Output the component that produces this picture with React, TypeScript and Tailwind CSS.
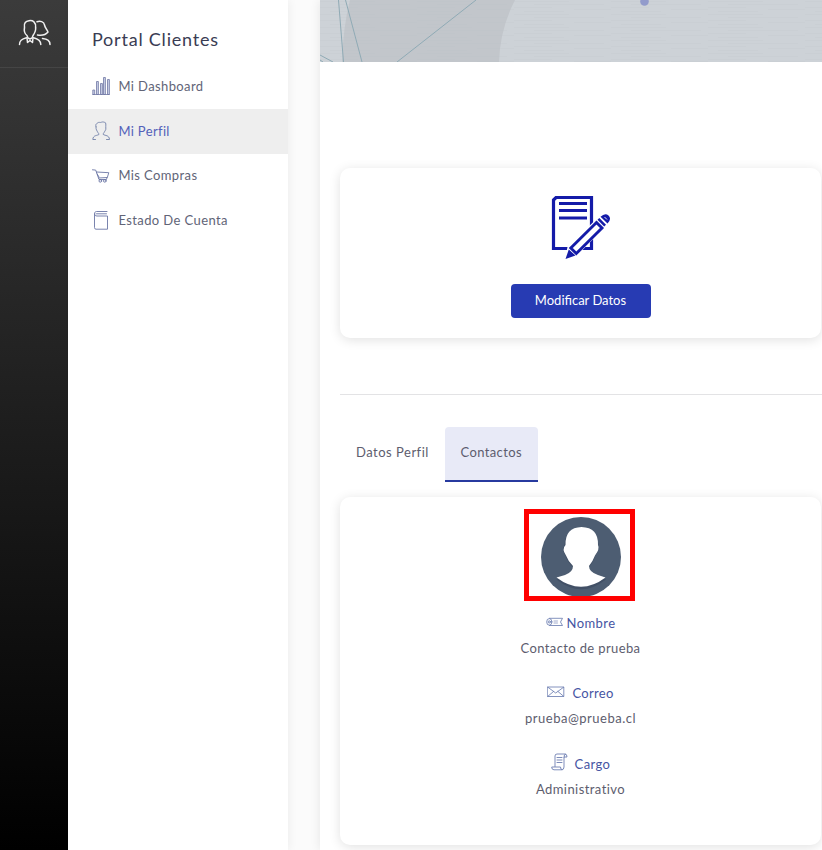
import type { ReactNode } from "react";

const stroke = { fill: "none", stroke: "currentColor", strokeLinecap: "round", strokeLinejoin: "round" } as const;

function UsersIcon() {
  return (
    <svg className="block text-[#f0f0f0]" width="34" height="28" viewBox="0 0 34 28" {...stroke} strokeWidth="1.5">
      <path d="M6.500 8.500C5.500 3.500 8 2.200 11 1.700C15 1.200 18 3 17.600 8.500C18.200 12 16 15 15 16.500L14 19L12 20L10 19L9 16.500C7 15 5.800 12 6.500 8.500Z" />
      <path d="M19 2.700C22 1.600 26 2.500 26.500 6C27 8.500 28.500 10 30 13C28 15.500 25 16.800 19.500 16" />
      <path d="M1.500 25.500C1.500 21.500 3.500 20 8.500 18.700M15.500 18.700C21 20 22.800 22 22.800 25.500" />
      <path d="M24.500 19.500C29 19.800 32 21.800 32 25.500" />
      <path d="M9 19L9.500 23.500L12 21.500L14.500 23.500L15 19" />
    </svg>
  );
}

function ChartIcon() {
  return (
    <svg className="block" width="19" height="20" viewBox="0 0 19 20" fill="#c9cfe6" stroke="#7178a5" strokeWidth=".8">
      <path d="M.8 14h1.900v4.500H.8zM4.500 5.500h1.900v13H4.500zM8.500 7.500h1.900v11H8.500zM11.500 1.500h1.900v17H11.500zM15.500 3.500h1.900v15H15.500zM.4 18.500h17.200" />
    </svg>
  );
}

function UserIcon() {
  return (
    <svg className="block" width="19" height="20" viewBox="0 0 19 20" {...stroke} strokeWidth=".9">
      <path d="M4 5.800C3.200 3 4.500 2.800 5.500 2C7 .7 8 1.900 9.500 1.200C11 .6 12.500 1.200 13.500 1.800C14.200 3.500 13.600 4.500 13.800 7C14.200 9 13 9.500 12.500 10.800C12 12 11 12.500 11.200 13.400C13 14.800 17.300 14 17.500 18.500H14.500M3.500 18.500H.8C1 14 5.200 14.800 7 13.400C7 12.500 6 12 5.500 10.800C5 9.500 3.800 9 4 5.800" />
    </svg>
  );
}

function CartIcon() {
  return (
    <svg className="block" width="19" height="20" viewBox="0 0 19 20" {...stroke} strokeWidth=".9">
      <path d="M.5 3.800L3.700 4.100L7 13.500H14.500L15 11.500M4.500 6L16.800 6.700L15.300 11.500L6.600 12M5.200 8L7 11" />
      <circle cx="8.300" cy="14.900" r="1.300" />
      <circle cx="12.800" cy="14.900" r="1.300" />
    </svg>
  );
}

function BookIcon() {
  return (
    <svg className="block" width="19" height="20" viewBox="0 0 19 20" {...stroke} strokeWidth=".9">
      <path d="M15 1.500H4.500C2.500 1.500 2.500 3.500 2.500 5V17.500Q2.500 19.200 4 19.200H15.500V6H5C3 6 2.500 4.800 2.700 3.700M4.500 3.800H14.500" />
    </svg>
  );
}

function EditDocumentIcon() {
  return (
    <svg className="block" width="60" height="66" viewBox="0 0 60 66">
      <path d="M5 2.500H40.500V53.500H2.500V5Z" fill="#fff" stroke="#141ba8" strokeWidth="3.200" />
      <path d="M8 8.500H36M8 15.500H36M8 23H36" stroke="#141ba8" strokeWidth="2.800" />
      <path d="M14 64L16.500 52L46 23.500L54 32L26.500 60Z" fill="#fff" />
      <path d="M19.800 53L45.500 27.500L51 33L25.300 58.500Z" fill="#fff" stroke="#141ba8" strokeWidth="2.900" />
      <path d="M17.800 54.500L24.500 60.500L14.500 64Z" fill="#141ba8" />
      <path d="M46.500 24.800L48.300 23L55 29.700L53.200 31.500ZM49.500 21.800Q54 17.500 57.500 20.500Q61 24 56.500 28.500Z" fill="#141ba8" />
      <path d="M53.500 22L56 24.500" stroke="#fff" strokeWidth=".9" />
    </svg>
  );
}

function TicketIcon() {
  return (
    <svg className="block" width="18" height="10" viewBox="0 0 18 10" {...stroke} strokeWidth=".8">
      <path d="M3.500 1.300H16.500L14.500 5L16.500 8.500H3.500" />
      <ellipse cx="3.300" cy="4.900" rx="2.600" ry="3.300" />
      <circle cx="3.300" cy="4.900" r="1.100" />
      <path d="M8 4H11.500M8 6H11.500" strokeWidth="1" opacity=".6" />
    </svg>
  );
}

function MailIcon() {
  return (
    <svg className="block" width="18" height="12" viewBox="0 0 18 12" {...stroke} strokeWidth=".8">
      <path d="M.7 1H16.800V10.500H.7ZM1 1.300L8.700 7L16.500 1.300M1 10.200L6.500 5.500M16.500 10.200L11 5.500" />
    </svg>
  );
}

function ScrollIcon() {
  return (
    <svg className="block" width="17" height="18" viewBox="0 0 17 18" {...stroke} strokeWidth=".85">
      <path d="M4 13.500V3Q4 1 6 1H14Q16 1 16 4H13V14Q13 16.800 10.500 16.800H3Q.7 16.800.7 14H9.500Q9.500 16.800 11 16.800M13 4Q13 1 14.500 1M6 4.500H11M6 7H11M6 9.500H11" />
    </svg>
  );
}

function Avatar() {
  return (
    <svg className="block" width="80" height="80" viewBox="0 0 80 80">
      <circle cx="40" cy="40" r="40" fill="#4d5d72" />
      <path d="M15.500 62.500Q40 82 65 62.500L56 58Q48 54 48 50Q52 46 54.500 38Q58 35 57.500 30Q57 12 40.500 10Q24 12 23.500 28Q20.500 33 24 38Q27 46 32 50Q32 54 24 58Z" fill="#3d4b61" opacity=".7" />
      <path d="M15.500 60.500Q40 79 64.500 60.500L57 58Q48 55 48 49Q51.500 45 54 38.500Q59 32 57 28Q57.500 10.500 40.500 10Q24 10.500 24.500 28Q20.500 32 25 38.500Q27.500 45 32 49Q32 55 24 58Z" fill="#fff" />
    </svg>
  );
}

function MenuItem({ icon, label, tracking, active }: { icon: ReactNode; label: string; tracking: string; active?: boolean }) {
  return (
    <a className={`flex items-center pl-6 ${active ? "h-[45px] bg-[#eeeeee]" : "h-[44.500px]"}`}>
      <span className={`w-[26.400px] ${active ? "text-[#7180a8]" : "text-[#6b76a5]"}`}>{icon}</span>
      <span className={`pb-px text-[13px] leading-5 ${tracking} ${active ? "text-[#5361ba]" : "text-[#616477]"}`}>{label}</span>
    </a>
  );
}

function Field({ icon, label, gap, value, labelTracking, valueTracking }: { icon: ReactNode; label: string; gap: string; value: string; labelTracking: string; valueTracking: string }) {
  return (
    <div className="flex h-[70.400px] flex-col items-center">
      <div className={`flex h-[25px] items-center ${gap}`}>
        <span className="-mt-1 text-[#6577ad]">{icon}</span>
        <span className={`pb-px text-[13px] leading-5 text-[#4655a3] ${labelTracking}`}>{label}</span>
      </div>
      <div className={`text-[13px] leading-[25px] text-[#5d5d6e] ${valueTracking}`}>{value}</div>
    </div>
  );
}

function Banner() {
  return (
    <svg className="block" width="502" height="62" viewBox="0 0 502 62">
      <defs>
        <pattern id="weave" width="97" height="13" patternUnits="userSpaceOnUse">
          <path d="M0 1.500H55M20 4.500H90M0 7.500H38M60 9.500H97M10 11.500H50" stroke="#b3babf" strokeWidth=".7" opacity=".22" />
        </pattern>
      </defs>
      <rect width="502" height="62" fill="#cdd2d7" />
      <path d="M30 0Q23 27 22 62H179Q180 29 195 0Z" fill="#c2c6cb" />
      <rect width="502" height="62" fill="url(#weave)" />
      <path d="M18.500 0L23.500 62M25.500 0L42 62M77 62L156 0M0 55L13 62M0 60L3 62" fill="none" stroke="#8faab5" strokeWidth="1" />
      <circle cx="324.500" cy="1.500" r="4.300" fill="#929bcb" />
    </svg>
  );
}

export default function App() {
  return (
    <div className="flex h-[850px] w-[822px] overflow-hidden bg-[#fbfbfb] font-['Lato','Noto_Sans',sans-serif]">
      <aside className="w-[68px] shrink-0 bg-[linear-gradient(to_bottom,#3b3b3b,#000000)]">
        <div className="h-[68px] border-b border-[#454545] pt-[19px] pl-[18px]">
          <UsersIcon />
        </div>
      </aside>

      <nav className="w-[220px] shrink-0 bg-white shadow-[0_0_10px_rgba(0,0,0,0.07)]">
        <h1 className="h-16 pt-[25px] pl-6 text-[18px] leading-7 tracking-[0.780px] text-[#3a3c53]">Portal Clientes</h1>
        <MenuItem icon={<ChartIcon />} label="Mi Dashboard" tracking="tracking-[0.400px]" />
        <MenuItem icon={<UserIcon />} label="Mi Perfil" tracking="tracking-[0.350px]" active />
        <MenuItem icon={<CartIcon />} label="Mis Compras" tracking="tracking-[0.400px]" />
        <MenuItem icon={<BookIcon />} label="Estado De Cuenta" tracking="tracking-[0.400px]" />
      </nav>

      <main className="ml-8 w-[502px] shrink-0 bg-white shadow-[0_0_10px_rgba(0,0,0,0.09)]">
        <Banner />
        <div className="pt-[106px] pl-5">
          <section className="flex h-[170px] w-[481px] flex-col items-center rounded-[10px] bg-white pt-[27px] shadow-[0_2px_12px_rgba(0,0,0,0.12)]">
            <div className="pl-px">
              <EditDocumentIcon />
            </div>
            <button className="mt-[23px] h-[34px] w-[140px] rounded bg-[#273bb3] pb-px text-[13px] text-white">Modificar Datos</button>
          </section>

          <hr className="mt-14 border-[#e3e3e5]" />

          <div className="mt-8 flex h-[55px] text-[13px] text-[#5d5d6e]">
            <button className="w-[105px] pb-[3px] pl-4 text-left tracking-[0.500px]">Datos Perfil</button>
            <button className="w-[93px] rounded-t border-b-2 border-[#273a9f] bg-[#e8eaf7] pb-px pl-[15.500px] text-left tracking-[0.380px]">Contactos</button>
          </div>

          <section className="mt-[15px] flex h-[348px] w-[481px] flex-col items-center rounded-[10px] bg-white pt-3 shadow-[0_2px_12px_rgba(0,0,0,0.12)]">
            <div className="mr-[2px] flex h-[92px] w-[111px] justify-center overflow-hidden border-[5px] border-[#ff0000] pt-[3px] pl-[3px]">
              <Avatar />
            </div>
            <div className="pt-2.5">
              <Field icon={<TicketIcon />} label="Nombre" gap="gap-[3px]" value="Contacto de prueba" labelTracking="tracking-[0.400px]" valueTracking="tracking-[0.380px]" />
              <Field icon={<MailIcon />} label="Correo" gap="gap-[7px]" value="prueba@prueba.cl" labelTracking="tracking-[0.300px]" valueTracking="tracking-[0.500px]" />
              <Field icon={<ScrollIcon />} label="Cargo" gap="gap-[7px]" value="Administrativo" labelTracking="tracking-[0.400px]" valueTracking="tracking-[0.430px]" />
            </div>
          </section>
        </div>
      </main>
    </div>
  );
}
